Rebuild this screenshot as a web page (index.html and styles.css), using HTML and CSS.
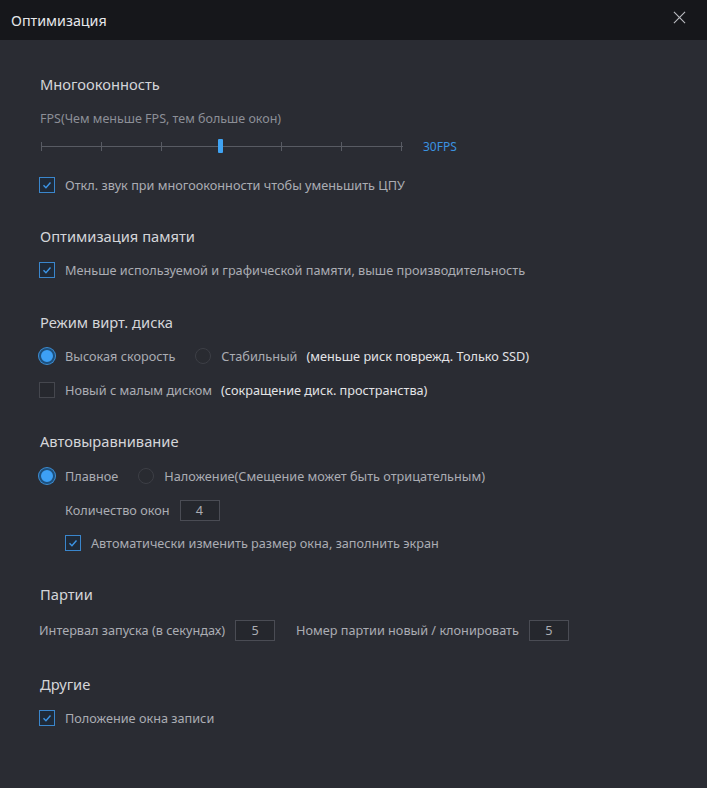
FILE: index.html
```html
<!DOCTYPE html>
<html lang="ru">
<head>
<meta charset="utf-8">
<title>Оптимизация</title>
<link rel="stylesheet" href="styles.css">
</head>
<body>
<div class="window">
  <header class="titlebar">
    <span class="title">Оптимизация</span>
    <svg class="close" width="14" height="14" viewBox="0 0 14 14"><path d="M1 1L13 13M13 1L1 13" stroke="#b9bbc0" stroke-width="1.2" fill="none"/></svg>
  </header>
  <main class="content">
    <section class="section first">
      <h2 class="heading">Многооконность</h2>
      <div class="sublabel">FPS(Чем меньше FPS, тем больше окон)</div>
      <div class="slider-row">
        <div class="slider">
          <div class="track"></div>
          <span class="tick" style="left:0px"></span>
          <span class="tick" style="left:60px"></span>
          <span class="tick" style="left:120px"></span>
          <span class="tick" style="left:240px"></span>
          <span class="tick" style="left:300px"></span>
          <span class="tick" style="left:360px"></span>
          <span class="thumb" style="left:177px"></span>
        </div>
        <span class="fps">30FPS</span>
      </div>
      <label class="row check-row after-slider">
        <span class="cb checked"><svg viewBox="0 0 16 16"><path d="M4 8.2L6.8 11L12 5.2" stroke="#3d95e6" stroke-width="1.6" fill="none"/></svg></span>
        <span class="text">Откл. звук при многооконности чтобы уменьшить ЦПУ</span>
      </label>
    </section>

    <section class="section">
      <h2 class="heading">Оптимизация памяти</h2>
      <label class="row check-row">
        <span class="cb checked"><svg viewBox="0 0 16 16"><path d="M4 8.2L6.8 11L12 5.2" stroke="#3d95e6" stroke-width="1.6" fill="none"/></svg></span>
        <span class="text">Меньше используемой и графической памяти, выше производительность</span>
      </label>
    </section>

    <section class="section s3">
      <h2 class="heading">Режим вирт. диска</h2>
      <div class="row">
        <span class="radio on"></span>
        <span class="text">Высокая скорость</span>
        <span class="radio off sp"></span>
        <span class="text">Стабильный</span>
        <span class="note">(меньше риск поврежд. Только SSD)</span>
      </div>
      <label class="row check-row">
        <span class="cb"></span>
        <span class="text">Новый с малым диском</span>
        <span class="note">(сокращение диск. пространства)</span>
      </label>
    </section>

    <section class="section s4">
      <h2 class="heading">Автовыравнивание</h2>
      <div class="row">
        <span class="radio on"></span>
        <span class="text">Плавное</span>
        <span class="radio off sp"></span>
        <span class="text">Наложение(Смещение может быть отрицательным)</span>
      </div>
      <div class="row indent">
        <span class="text">Количество окон</span>
        <span class="num">4</span>
      </div>
      <label class="row check-row indent tight">
        <span class="cb checked"><svg viewBox="0 0 16 16"><path d="M4 8.2L6.8 11L12 5.2" stroke="#3d95e6" stroke-width="1.6" fill="none"/></svg></span>
        <span class="text">Автоматически изменить размер окна, заполнить экран</span>
      </label>
    </section>

    <section class="section s5">
      <h2 class="heading">Партии</h2>
      <div class="row batch">
        <span class="text">Интервал запуска (в секундах)</span>
        <span class="num">5</span>
        <span class="text sp2">Номер партии новый / клонировать</span>
        <span class="num">5</span>
      </div>
    </section>

    <section class="section last">
      <h2 class="heading">Другие</h2>
      <label class="row check-row">
        <span class="cb checked"><svg viewBox="0 0 16 16"><path d="M4 8.2L6.8 11L12 5.2" stroke="#3d95e6" stroke-width="1.6" fill="none"/></svg></span>
        <span class="text">Положение окна записи</span>
      </label>
    </section>
  </main>
</div>
</body>
</html>
```

FILE: styles.css
```css
* { box-sizing: border-box; }
html, body { margin: 0; padding: 0; }
body {
  width: 707px;
  height: 788px;
  background: #2a2c33;
  font-family: "Noto Sans", "Open Sans", sans-serif;
  overflow: hidden;
}
.window { width: 707px; height: 788px; display: flex; flex-direction: column; }
.titlebar {
  height: 40px;
  flex: none;
  background: #16171b;
  display: flex;
  align-items: center;
  justify-content: space-between;
  padding: 0 21px 0 11px;
}
.title { color: #e6e7ea; font-size: 14.3px; }
.close { width: 13px; height: 13px; position: relative; top: -3px; }
.content {
  flex: 1;
  padding: 0 0 0 39px;
}
.section { margin-top: 31px; }
.section.first { margin-top: 34px; }
.section.s3 { margin-top: 32px; }
.section.last { margin-top: 34px; }
.heading {
  margin: 0 0 14px 1px;
  font-size: 14.7px;
  font-weight: normal;
  line-height: 20px;
  color: #d4d5d9;
}
.s4 .heading { margin-bottom: 15px; }
.s5 .heading { margin-bottom: 16px; }
.first .heading { margin-bottom: 0; }
.sublabel {
  margin: 16px 0 0 1px;
  font-size: 12.5px;
  line-height: 18px;
  color: #8c8f97;
}
.slider-row {
  margin-top: 8px;
  height: 20px;
  display: flex;
  align-items: center;
}
.slider {
  position: relative;
  width: 362px;
  height: 20px;
  margin-left: 2px;
}
.track {
  position: absolute;
  left: 0; right: 0; top: 10px;
  height: 1px;
  background: #585b63;
}
.tick {
  position: absolute;
  top: 6px;
  width: 1px;
  height: 9px;
  background: #585b63;
}
.thumb {
  position: absolute;
  top: 3px;
  width: 5px;
  height: 14px;
  background: #3fa3f3;
  border-radius: 1px;
}
.fps {
  margin-left: 20px;
  font-size: 12px;
  color: #3a93e0;
}
.row {
  display: flex;
  align-items: center;
  height: 20px;
  margin-top: 14px;
  font-size: 12.7px;
  color: #abadb3;
  white-space: nowrap;
}
.heading + .row { margin-top: 0; }
.row.after-slider { margin-top: 19px; }
.row.tight { margin-top: 13px; }
.text { line-height: 20px; }
.cb {
  width: 16px;
  height: 16px;
  flex: none;
  border: 1px solid #45474e;
  background: #26282e;
  margin-right: 10px;
  display: flex;
}
.cb.checked { border-color: #3a86cc; background: #1f2a38; }
.cb svg { width: 14px; height: 14px; }
.radio {
  width: 16px;
  height: 16px;
  flex: none;
  border-radius: 50%;
  margin-right: 10px;
}
.radio.on {
  background: #3da0f5;
  border: 2px solid #1d4f7c;
  box-shadow: 0 0 0 1px #3d8dd3;
}
.radio.off { border: 1px solid #3d3f46; background: #292b31; }
.sp { margin-left: 20px; }
.note { color: #e2e3e6; margin-left: 9px; }
.indent { padding-left: 26px; }
.num {
  width: 40px;
  height: 21px;
  border: 1px solid #4a4c54;
  background: #25272d;
  color: #abadb3;
  display: flex;
  align-items: center;
  justify-content: center;
  margin-left: 10px;
  font-size: 12.7px;
}
.sp2 { margin-left: 21px; }
```
